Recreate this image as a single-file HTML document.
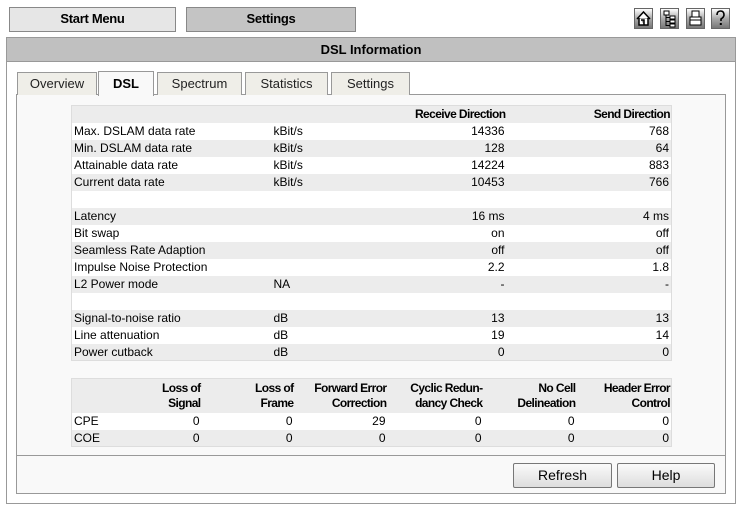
<!DOCTYPE html>
<html><head><style>
*{margin:0;padding:0;box-sizing:border-box}
body{width:741px;height:507px;background:#fff;font-family:"Liberation Sans",Arial,sans-serif;font-size:12px;color:#000;position:relative;overflow:hidden}
.abs{position:absolute}
.btn{position:absolute;border:1px solid #888;font-weight:bold;font-size:13px;text-align:center;line-height:22px;letter-spacing:-0.3px}
.ic{position:absolute;top:8px;width:19px;height:21px;border:1px solid #666;background:linear-gradient(#fff,#aaa 50%,#777)}
.tab{position:absolute;top:72px;height:23px;border:1px solid #999;border-bottom:none;background:#efeee8;font-size:13px;text-align:center;line-height:21px;color:#222}
table{border-collapse:collapse;position:absolute;border:1px solid #ddd;font-size:12px;table-layout:fixed}
td,th{height:17px;padding:0 2px;white-space:nowrap;overflow:visible}
tr:nth-child(even) td,tr:nth-child(even) th{background:#fff}
tr:nth-child(odd) td,tr:nth-child(odd) th{background:#ececec}
.r{text-align:right}
th{font-weight:bold;text-align:right;padding:0 1px;letter-spacing:-0.6px;line-height:15px;font-size:12px}
.pb{position:absolute;top:463px;height:25px;border:1px solid #777;border-radius:2px;background:linear-gradient(#fafafa,#ddd);font-size:14px;text-align:center;line-height:23px}
</style></head><body>
<div class="btn" style="left:9px;top:7px;width:167px;height:25px;background:#e6e6e6">Start Menu</div>
<div class="btn" style="left:186px;top:7px;width:170px;height:25px;background:#c4c4c4">Settings</div>
<div class="ic" style="left:634px"><svg width="17" height="19" viewBox="0 0 17 19"><path d="M2 10 L8.5 3 L15 10 M4 9 V16 H13 V9 M6 11 H9 V16" fill="#fff" stroke="#000" stroke-width="1.5"/></svg></div>
<div class="ic" style="left:660px"><svg width="17" height="19" viewBox="0 0 17 19"><rect x="3" y="2" width="5" height="4" fill="#fff" stroke="#000"/><rect x="9" y="7" width="5" height="3" fill="#fff" stroke="#000"/><rect x="9" y="11" width="5" height="3" fill="#fff" stroke="#000"/><rect x="9" y="15" width="5" height="3" fill="#fff" stroke="#000"/><path d="M5 6 V16.5 H9 M5 8.5 H9 M5 12.5 H9" fill="none" stroke="#000"/></svg></div>
<div class="ic" style="left:686px"><svg width="17" height="19" viewBox="0 0 17 19"><rect x="5" y="2" width="7" height="6" fill="#fff" stroke="#000"/><rect x="3" y="8" width="11" height="8" fill="#fff" stroke="#000"/><path d="M3 11 H14" stroke="#000"/></svg></div>
<div class="ic" style="left:711px"><svg width="17" height="19" viewBox="0 0 17 19"><path d="M5 6 Q5 2 8.5 2 Q12 2 12 6 Q12 8 9 10 V12" fill="none" stroke="#000" stroke-width="1.6"/><rect x="7.8" y="14" width="2" height="2" fill="#000"/></svg></div>
<div class="abs" style="left:6px;top:37px;width:730px;height:467px;border:1px solid #999"></div>
<div class="abs" style="left:7px;top:38px;width:728px;height:24px;background:#c0c0c0;border-bottom:1px solid #999;text-align:center;font-weight:bold;font-size:13px;line-height:23px">DSL Information</div>
<div class="abs" style="left:16px;top:94px;width:710px;height:400px;border:1px solid #999;background:#f9f9f9"></div>
<div class="abs" style="left:17px;top:455px;width:708px;height:1px;background:#999"></div>
<div class="tab" style="left:17px;width:80px">Overview</div>
<div class="tab" style="left:98px;top:71px;width:56px;height:25px;background:#f9f9f9;font-weight:bold;color:#000;line-height:23px">DSL</div>
<div class="tab" style="left:157px;width:85px">Spectrum</div>
<div class="tab" style="left:245px;width:83px">Statistics</div>
<div class="tab" style="left:331px;width:79px">Settings</div>
<table style="left:71px;top:105px;width:600px">
<colgroup><col style="width:200px"><col style="width:130px"><col style="width:105px"><col style="width:165px"></colgroup>
<tr><td></td><td></td><th>Receive Direction</th><th>Send Direction</th></tr>
<tr><td>Max. DSLAM data rate</td><td>kBit/s</td><td class="r">14336</td><td class="r">768</td></tr>
<tr><td>Min. DSLAM data rate</td><td>kBit/s</td><td class="r">128</td><td class="r">64</td></tr>
<tr><td>Attainable data rate</td><td>kBit/s</td><td class="r">14224</td><td class="r">883</td></tr>
<tr><td>Current data rate</td><td>kBit/s</td><td class="r">10453</td><td class="r">766</td></tr>
<tr><td></td><td></td><td></td><td></td></tr>
<tr><td>Latency</td><td></td><td class="r">16 ms</td><td class="r">4 ms</td></tr>
<tr><td>Bit swap</td><td></td><td class="r">on</td><td class="r">off</td></tr>
<tr><td>Seamless Rate Adaption</td><td></td><td class="r">off</td><td class="r">off</td></tr>
<tr><td>Impulse Noise Protection</td><td></td><td class="r">2.2</td><td class="r">1.8</td></tr>
<tr><td>L2 Power mode</td><td>NA</td><td class="r">-</td><td class="r">-</td></tr>
<tr><td></td><td></td><td></td><td></td></tr>
<tr><td>Signal-to-noise ratio</td><td>dB</td><td class="r">13</td><td class="r">13</td></tr>
<tr><td>Line attenuation</td><td>dB</td><td class="r">19</td><td class="r">14</td></tr>
<tr><td>Power cutback</td><td>dB</td><td class="r">0</td><td class="r">0</td></tr>
</table>
<table style="left:71px;top:378px;width:600px">
<colgroup><col style="width:36px"><col style="width:94px"><col style="width:93px"><col style="width:93px"><col style="width:96px"><col style="width:93px"><col style="width:95px"></colgroup>
<tr><td style="height:34px"></td><th>Loss of<br>Signal</th><th>Loss of<br>Frame</th><th>Forward Error<br>Correction</th><th>Cyclic Redun-<br>dancy Check</th><th>No Cell<br>Delineation</th><th>Header Error<br>Control</th></tr>
<tr><td>CPE</td><td class="r">0</td><td class="r">0</td><td class="r">29</td><td class="r">0</td><td class="r">0</td><td class="r">0</td></tr>
<tr><td>COE</td><td class="r">0</td><td class="r">0</td><td class="r">0</td><td class="r">0</td><td class="r">0</td><td class="r">0</td></tr>
</table>
<div class="pb" style="left:513px;width:99px">Refresh</div>
<div class="pb" style="left:617px;width:98px">Help</div>
</body></html>
